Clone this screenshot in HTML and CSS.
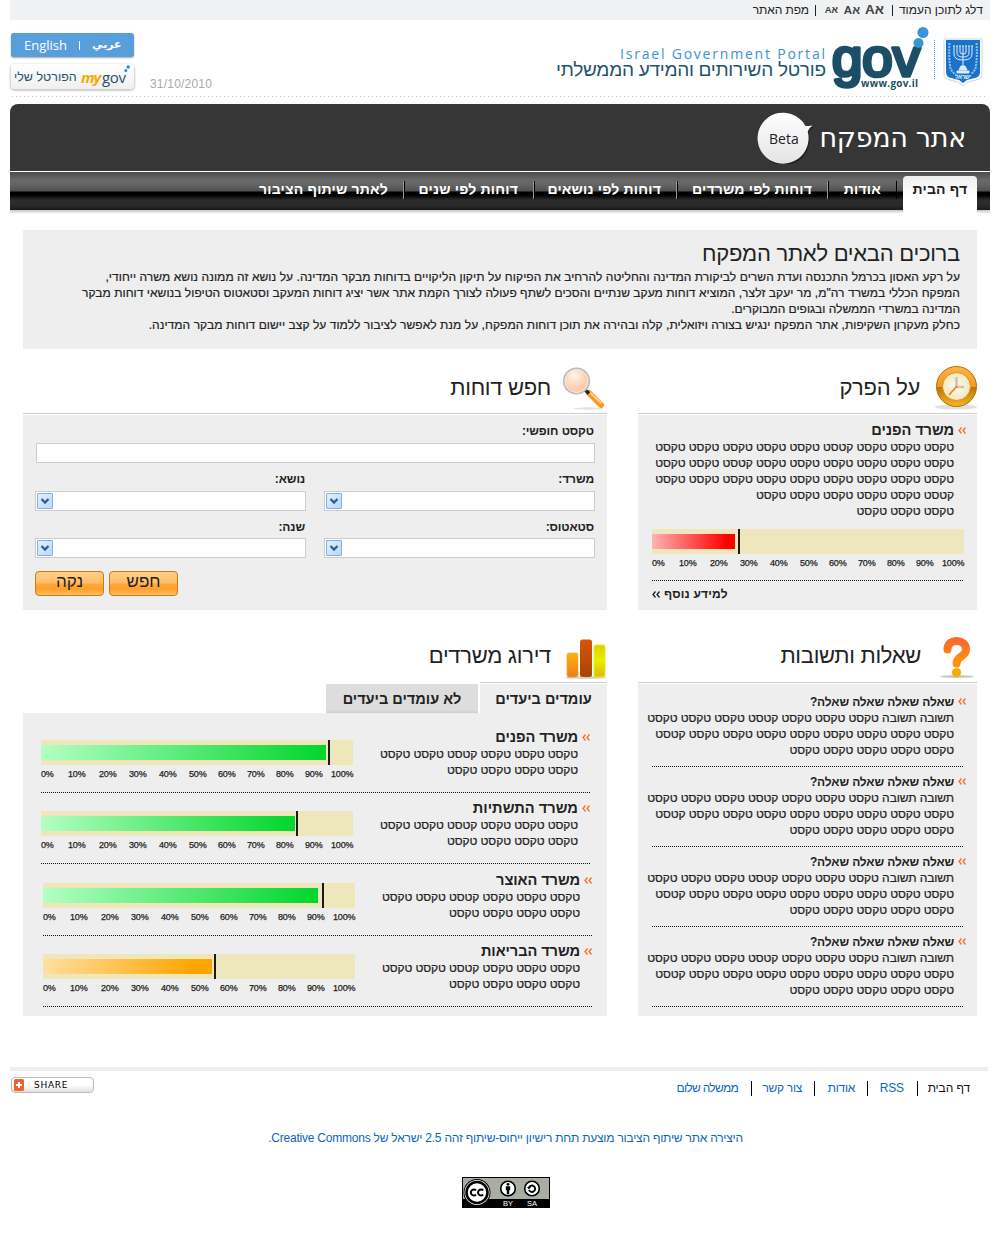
FILE: index.html
```html
<!DOCTYPE html>
<html lang="he" dir="rtl">
<head>
<meta charset="utf-8">
<title>אתר המפקח</title>
<link rel="stylesheet" href="styles.css">
</head>
<body>
<svg class="defs" width="0" height="0" aria-hidden="true">
  <symbol id="chev" viewBox="0 0 8 7"><path d="M3.5 .5 1 3.5l2.500 3M7.500 .5 5 3.500l2.500 3" fill="none" stroke="currentColor" stroke-width="1.300"/></symbol>
</svg>
<div class="page">
  <div class="topbar">
    <a class="skip">דלג לתוכן העמוד</a><i class="sep"></i>
    <b class="fs fs-l">אA</b><b class="fs fs-m">אA</b><b class="fs fs-s">אA</b><i class="sep"></i>
    <a class="map">מפת האתר</a>
  </div>

  <header class="header">
    <svg class="logo" width="432" height="70" viewBox="554 24 432 70" direction="ltr">
      <text x="620" y="59" font-family="'Open Sans', sans-serif" font-size="14" fill="#3b92d4" textLength="205">Israel Government Portal</text>
      <text x="556" y="76" direction="ltr" font-family="'Liberation Sans', sans-serif" font-size="19" fill="#1c546c" textLength="270">פורטל השירותים והמידע הממשלתי</text>
      <text x="832" y="75.500" font-family="'Liberation Sans', sans-serif" font-size="51" fill="#1c4f66" stroke="#1c4f66" stroke-width="3.600" stroke-linejoin="round" textLength="88" lengthAdjust="spacingAndGlyphs">gov</text>
      <circle cx="923" cy="32.500" r="5.500" fill="#3b92d4"/><circle cx="918.500" cy="43" r="5" fill="#3b92d4"/>
      <text x="861" y="87" font-family="'Open Sans', sans-serif" font-weight="bold" font-size="10" fill="#1c4f66" stroke="#fff" stroke-width="2" paint-order="stroke" textLength="57">www.gov.il</text>
      <path d="M934.500 40v39" stroke="#4aa0dc" stroke-dasharray="1 1"/>
      <path d="M944 39h38v34q0 6-6 7l-8 2-5 4-5-4-8-2q-6-1-6-7z" fill="#fff" stroke="#c8d8e8"/>
      <path d="M946 40h34v32q0 5-5 6l-8 2-4 3-4-3-8-2q-5-1-5-6z" fill="#1b72c8"/>
      <g fill="none" stroke="#dcecfa" stroke-width="1">
        <path d="M963 46v20M960 46v6q0 2 3 2t3-2v-6M957 46v7q0 4 6 4t6-4v-7M954 46v8q0 6 9 6t9-6v-8"/>
        <path d="M953 46h20" stroke-dasharray="2 1"/><path d="M961 66h4l2 4h-8zM957 71h12v2h-12z" fill="#dcecfa"/>
        <path d="M949.500 43q-1 14 1 26l4 5M976.500 43q1 14-1 26l-4 5" stroke="#8fc0ee" stroke-width="2" stroke-dasharray="2 1"/>
      </g>
      <text x="955" y="79" font-family="'Liberation Sans', sans-serif" font-size="6" font-weight="bold" fill="#e4f0fc" textLength="16">ישראל</text>
    </svg>
    <div class="side">
      <div class="side-buttons">
        <div class="langs"><span>English</span><i></i><b>عربي</b></div>
        <div class="mygov">
          <span class="mygov-he">הפורטל שלי</span><span class="mygov-my">my</span><span class="mygov-gov">gov</span>
          <svg class="mygov-dots" width="6" height="8" viewBox="0 0 6 8"><circle cx="1.800" cy="5.500" r="1.500" fill="#2a8fd6"/><circle cx="4.200" cy="2" r="1.700" fill="#2a8fd6"/></svg>
        </div>
      </div>
      <span class="date">31/10/2010</span>
    </div>
  </header>

  <div class="banner">
    <h1>אתר המפקח</h1>
    <div class="beta">
      <svg width="60" height="56" viewBox="0 0 60 56">
        <defs><linearGradient id="bub" x2="0" y2="1"><stop offset="0" stop-color="#fff"/><stop offset="1" stop-color="#e4e4e4"/></linearGradient></defs>
        <path d="M49.500 18q3 0 7-.5-3.500 2.500-4.800 6A25.500 25.500 0 1 1 49.500 18z" fill="#111" opacity=".6" transform="translate(1 1.500)"/>
        <path d="M49.500 18q3 0 7-.5-3.500 2.500-4.800 6A25.500 25.500 0 1 1 49.500 18z" fill="url(#bub)"/>
      </svg>
      <span>Beta</span>
    </div>
  </div>
  <nav class="nav">
    <a class="on">דף הבית</a>
    <a class="n2">אודות</a>
    <a class="n3">דוחות לפי משרדים</a>
    <a class="n4">דוחות לפי נושאים</a>
    <a class="n5">דוחות לפי שנים</a>
    <a class="n6">לאתר שיתוף הציבור</a>
  </nav>

  <section class="intro">
    <h2>ברוכים הבאים לאתר המפקח</h2>
    <p><span class="i1">על רקע האסון בכרמל התכנסה ועדת השרים לביקורת המדינה והחליטה להרחיב את הפיקוח על תיקון הליקויים בדוחות מבקר המדינה. על נושא זה ממונה נושא משרה ייחודי,</span><br>
    <span class="i2">המפקח הכללי במשרד רה"מ, מר יעקב זלצר, המוציא דוחות מעקב שנתיים והסכים לשתף פעולה לצורך הקמת אתר אשר יציג דוחות המעקב וסטאטוס הטיפול בנושאי דוחות מבקר</span><br>
    המדינה במשרדי הממשלה ובגופים המבוקרים.<br>
    <span class="i4">כחלק מעקרון השקיפות, אתר המפקח ינגיש בצורה ויזואלית, קלה ובהירה את תוכן דוחות המפקח, על מנת לאפשר לציבור ללמוד על קצב יישום דוחות מבקר המדינה.</span></p>
  </section>

  <main class="grid">
    <section class="agenda">
      <div class="head">
        <svg width="44" height="44" viewBox="0 0 44 44">
          <defs><linearGradient id="ck" x2="0" y2="1"><stop offset="0" stop-color="#ffb347"/><stop offset=".5" stop-color="#f09a1c"/><stop offset=".52" stop-color="#b87405"/><stop offset="1" stop-color="#f8b820"/></linearGradient>
          <radialGradient id="face"><stop offset="0" stop-color="#fffdf2"/><stop offset="1" stop-color="#f3e6bd"/></radialGradient></defs>
          <ellipse cx="22" cy="41" rx="21" ry="2.500" fill="#000" opacity=".12"/>
          <circle cx="22.500" cy="20.500" r="20" fill="url(#ck)" stroke="#b06f0c"/>
          <circle cx="22.500" cy="20.500" r="14" fill="url(#face)" stroke="#d9901d"/>
          <path d="M22.500 11v10M22 21h8" stroke="#c9c4ab" stroke-width="2.500"/><path d="M23 20l-8 9" stroke="#f07c10" stroke-width="1.600"/>
        </svg>
        <h2>על הפרק</h2>
      </div>
      <div class="panel agenda-panel">
        <div class="item">
          <svg class="chev"><use href="#chev"/></svg>
          <div><h3>משרד הפנים</h3>
          <p>טקסט טקסט טקסט קטסט טקסט טקסט טקסט טקסט טקסט<br>טקסט טקסט טקסט טקסט טקסט טקסט קטסט טקסט טקסט<br>טקסט טקסט טקסט טקסט טקסט טקסט טקסט טקסט טקסט<br>קטסט טקסט טקסט טקסט טקסט טקסט<br>טקסט טקסט טקסט</p></div>
        </div>
        <div class="chart">
          <div class="bar"><div class="fill red" style="width:83px"></div><div class="mark" style="left:86px"></div></div>
          <div class="scale"><span>0%</span><span>10%</span><span>20%</span><span>30%</span><span>40%</span><span>50%</span><span>60%</span><span>70%</span><span>80%</span><span>90%</span><span>100%</span></div>
        </div>
        <a class="more">למידע נוסף <svg class="chev"><use href="#chev"/></svg></a>
      </div>
    </section>

    <section class="search">
      <div class="head">
        <svg width="46" height="46" viewBox="0 0 46 46">
          <defs><radialGradient id="lens" cx=".4" cy=".3"><stop offset="0" stop-color="#fff4ec"/><stop offset="1" stop-color="#ffcdaa"/></radialGradient></defs>
          <ellipse cx="29" cy="43.500" rx="15" ry="1.200" fill="#000" opacity=".12"/>
          <path d="M29 28l12 12" stroke="#f59a22" stroke-width="6" stroke-linecap="round"/><path d="M29.500 27l12 11.500" stroke="#ffd08a" stroke-width="1.800"/>
          <path d="M24 24l5 4.500" stroke="#222" stroke-width="3.500"/>
          <circle cx="16.500" cy="16" r="12.700" fill="url(#lens)" stroke="#b9bcc0" stroke-width="1.800"/><circle cx="16.500" cy="16" r="11.500" fill="none" stroke="#ececec" stroke-width="1"/>
        </svg>
        <h2>חפש דוחות</h2>
      </div>
      <div class="panel form">
        <label>טקסט חופשי:</label>
        <div class="input"></div>
        <div class="fields">
          <label>משרד:</label><label>נושא:</label>
          <div class="select"><i><svg width="10" height="8" viewBox="0 0 10 8"><path d="M1.500 2 5 5.500 8.500 2" fill="none" stroke="#3c5887" stroke-width="2.300"/></svg></i></div>
          <div class="select"><i><svg width="10" height="8" viewBox="0 0 10 8"><path d="M1.500 2 5 5.500 8.500 2" fill="none" stroke="#3c5887" stroke-width="2.300"/></svg></i></div>
          <label>סטאטוס:</label><label>שנה:</label>
          <div class="select"><i><svg width="10" height="8" viewBox="0 0 10 8"><path d="M1.500 2 5 5.500 8.500 2" fill="none" stroke="#3c5887" stroke-width="2.300"/></svg></i></div>
          <div class="select"><i><svg width="10" height="8" viewBox="0 0 10 8"><path d="M1.500 2 5 5.500 8.500 2" fill="none" stroke="#3c5887" stroke-width="2.300"/></svg></i></div>
        </div>
        <div class="actions"><button>חפש</button><button>נקה</button></div>
      </div>
    </section>

    <section class="faq">
      <div class="head">
        <svg width="36" height="44" viewBox="0 0 36 44">
          <defs><linearGradient id="q" x2="0" y2="1"><stop offset="0" stop-color="#f96a2c"/><stop offset="1" stop-color="#ff9508"/></linearGradient></defs>
          <ellipse cx="18" cy="41.500" rx="17" ry="1.500" fill="#000" opacity=".22"/>
          <path d="M8.500 14.500C8.500 8 13 6 17.500 6S27 8.500 27 14.500C27 22 17.500 21 17.500 28.500" fill="none" stroke="url(#q)" stroke-width="8" stroke-linecap="round"/>
          <circle cx="17.500" cy="37.500" r="4.600" fill="#f6ab05"/>
        </svg>
        <h2>שאלות ותשובות</h2>
      </div>
      <div class="panel faq-panel">
        <div class="item qa"><svg class="chev"><use href="#chev"/></svg><div><h4>שאלה שאלה שאלה שאלה?</h4><p>תשובה תשובה טקסט טקסט טקסט קטסט טקסט טקסט טקסט<br>טקסט טקסט טקסט טקסט טקסט טקסט טקסט טקסט קטסט<br>טקסט טקסט טקסט טקסט טקסט</p></div></div>
        <div class="item qa"><svg class="chev"><use href="#chev"/></svg><div><h4>שאלה שאלה שאלה שאלה?</h4><p>תשובה תשובה טקסט טקסט טקסט קטסט טקסט טקסט טקסט<br>טקסט טקסט טקסט טקסט טקסט טקסט טקסט טקסט קטסט<br>טקסט טקסט טקסט טקסט טקסט</p></div></div>
        <div class="item qa"><svg class="chev"><use href="#chev"/></svg><div><h4>שאלה שאלה שאלה שאלה?</h4><p>תשובה תשובה טקסט טקסט טקסט קטסט טקסט טקסט טקסט<br>טקסט טקסט טקסט טקסט טקסט טקסט טקסט טקסט קטסט<br>טקסט טקסט טקסט טקסט טקסט</p></div></div>
        <div class="item qa"><svg class="chev"><use href="#chev"/></svg><div><h4>שאלה שאלה שאלה שאלה?</h4><p>תשובה תשובה טקסט טקסט טקסט קטסט טקסט טקסט טקסט<br>טקסט טקסט טקסט טקסט טקסט טקסט טקסט טקסט קטסט<br>טקסט טקסט טקסט טקסט טקסט</p></div></div>
      </div>
    </section>

    <section class="ranking">
      <div class="head">
        <svg width="44" height="42" viewBox="0 0 44 42">
          <defs>
            <linearGradient id="b1" x2="0" y2="1"><stop offset="0" stop-color="#f8b60a"/><stop offset="1" stop-color="#ee7d1d"/></linearGradient>
            <linearGradient id="b2" x2="0" y2="1"><stop offset="0" stop-color="#d95406"/><stop offset="1" stop-color="#a84503"/></linearGradient>
            <linearGradient id="b3" x2="0" y2="1"><stop offset="0" stop-color="#e0cc04"/><stop offset=".5" stop-color="#e6f000"/><stop offset="1" stop-color="#e0b808"/></linearGradient>
          </defs>
          <ellipse cx="22" cy="39.500" rx="21" ry="1.500" fill="#000" opacity=".18"/>
          <rect x="3" y="15" width="11" height="24" rx="2" fill="url(#b1)" stroke="#f3a021" stroke-width=".6"/>
          <rect x="16" y="1.500" width="12" height="37.500" rx="2.500" fill="url(#b2)"/>
          <rect x="30" y="7" width="11" height="32" rx="2" fill="url(#b3)" stroke="#f2e720"/>
        </svg>
        <h2>דירוג משרדים</h2>
      </div>
      <div class="tabs"><span class="tab active">עומדים ביעדים</span><span class="tab">לא עומדים ביעדים</span></div>
      <div class="panel rank-panel">
        <div class="row">
          <div class="item"><svg class="chev"><use href="#chev"/></svg><div><h3>משרד הפנים</h3><p>טקסט טקסט טקסט קטסט טקסט טקסט<br>טקסט טקסט טקסט טקסט</p></div></div>
          <div class="chart">
            <div class="bar"><div class="fill green" style="width:285px"></div><div class="mark" style="left:287px"></div></div>
            <div class="scale"><span>0%</span><span>10%</span><span>20%</span><span>30%</span><span>40%</span><span>50%</span><span>60%</span><span>70%</span><span>80%</span><span>90%</span><span>100%</span></div>
          </div>
        </div>
        <div class="row">
          <div class="item"><svg class="chev"><use href="#chev"/></svg><div><h3 class="wide">משרד התשתיות</h3><p>טקסט טקסט טקסט קטסט טקסט טקסט<br>טקסט טקסט טקסט טקסט</p></div></div>
          <div class="chart">
            <div class="bar"><div class="fill green" style="width:254px"></div><div class="mark" style="left:255px"></div></div>
            <div class="scale"><span>0%</span><span>10%</span><span>20%</span><span>30%</span><span>40%</span><span>50%</span><span>60%</span><span>70%</span><span>80%</span><span>90%</span><span>100%</span></div>
          </div>
        </div>
        <div class="row shifted tall">
          <div class="item"><svg class="chev"><use href="#chev"/></svg><div><h3>משרד האוצר</h3><p>טקסט טקסט טקסט קטסט טקסט טקסט<br>טקסט טקסט טקסט טקסט</p></div></div>
          <div class="chart">
            <div class="bar"><div class="fill green" style="width:275px"></div><div class="mark" style="left:279px"></div></div>
            <div class="scale"><span>0%</span><span>10%</span><span>20%</span><span>30%</span><span>40%</span><span>50%</span><span>60%</span><span>70%</span><span>80%</span><span>90%</span><span>100%</span></div>
          </div>
        </div>
        <div class="row shifted">
          <div class="item"><svg class="chev"><use href="#chev"/></svg><div><h3>משרד הבריאות</h3><p>טקסט טקסט טקסט קטסט טקסט טקסט<br>טקסט טקסט טקסט טקסט</p></div></div>
          <div class="chart">
            <div class="bar"><div class="fill orange" style="width:169px"></div><div class="mark" style="left:171px"></div></div>
            <div class="scale"><span>0%</span><span>10%</span><span>20%</span><span>30%</span><span>40%</span><span>50%</span><span>60%</span><span>70%</span><span>80%</span><span>90%</span><span>100%</span></div>
          </div>
        </div>
      </div>
    </section>
  </main>

  <footer class="footer">
    <div class="links"><a class="home">דף הבית</a><a class="rss">RSS</a><a class="about">אודות</a><a class="contact">צור קשר</a><a class="shalom">ממשלה שלום</a></div>
    <div class="share"><svg width="10" height="12" viewBox="0 0 10 12"><rect width="10" height="12" rx="1.500" fill="#f0622d"/><path d="M5 3v6M2 6h6" stroke="#fff" stroke-width="2"/></svg><span>SHARE</span></div>
  </footer>
  <p class="license">היצירה אתר שיתוף הציבור מוצעת תחת רישיון ייחוס-שיתוף זהה 2.5 ישראל של Creative Commons.</p>
  <svg class="cc" width="88" height="31" viewBox="0 0 88 31" direction="ltr">
    <rect width="88" height="31" fill="#000"/><rect x="1" y="1" width="86" height="21" fill="#a9aea5"/>
    <circle cx="15" cy="15.500" r="13.500" fill="#000"/><circle cx="15" cy="15.500" r="12.500" fill="#fff"/><circle cx="15" cy="15.500" r="10.500" fill="none" stroke="#000" stroke-width="2.600"/>
    <path d="M14 13.400a3 3 0 1 0 0 4.200M21.200 13.400a3 3 0 1 0 0 4.200" fill="none" stroke="#000" stroke-width="2"/>
    <circle cx="46" cy="11.500" r="7.300" fill="#fff" stroke="#000" stroke-width="1.600"/><circle cx="46" cy="7.300" r="1.400"/><path d="M43.800 9.300h4.400v4h-1v4h-2.400v-4h-1z"/>
    <circle cx="70" cy="11.500" r="7.300" fill="#fff" stroke="#000" stroke-width="1.600"/><path d="M67 10.500a3.200 3.200 0 1 1 0 2.500" fill="none" stroke="#000" stroke-width="1.900"/><path d="M65 10h4l-2 2.600z"/>
    <g fill="#fff" font-family="'Liberation Sans', sans-serif" font-size="7.500"><text x="41" y="29" textLength="10">BY</text><text x="65" y="29" textLength="10">SA</text></g>
  </svg>
</div>
</body>
</html>
```
FILE: styles.css
```css
* { box-sizing: border-box; }
body { margin: 0; background: #fff; color: #222; font: 12px/16px "Liberation Sans", Arial, sans-serif; }
h1, h2, h3, h4, p { margin: 0; font-weight: normal; white-space: nowrap; }
svg { display: block; }
.defs { position: absolute; }
.page { width: 980px; margin: 0 10px; }

.topbar { height: 20px; background: #f0f1f3; display: flex; align-items: center; padding-right: 7px; font-size: 12px; white-space: nowrap; }
.topbar .sep { width: 1px; height: 11px; background: #222; }
.skip { width: 84px; margin-left: 6px; }
.fs { color: #444; }
.fs-l { font-size: 13.5px; width: 19px; margin-right: 8px; }
.fs-m { font-size: 11.5px; width: 17px; margin-right: 5px; }
.fs-s { font-size: 9.5px; width: 15px; margin-right: 5px; margin-left: 7px; }
.map { margin-right: 6px; letter-spacing: -.1px; }

.header { height: 77px; margin: 0 2px 7px 0; padding: 4px 2px 0 0; display: flex; justify-content: space-between; background: repeating-linear-gradient(90deg, #d3bcc4 0 1px, transparent 1px 4px) 2px 76px / 976px 1px no-repeat; }
.side { display: flex; flex-direction: row-reverse; align-items: flex-start; padding-left: 1px; gap: 16px; }
.side-buttons { display: flex; flex-direction: column; gap: 7px; padding-top: 9px; width: 123px; }
.langs { direction: ltr; height: 24px; border-radius: 3px; background: #579edb; box-shadow: 0 1px 2px #aaa; color: #fff; display: flex; align-items: center; padding-left: 13px; gap: 12px; font: 13px/24px "Open Sans", sans-serif; }
.langs i { width: 1px; height: 9px; background: #fff; }
.langs b { font: bold 11px/16px "DejaVu Sans", sans-serif; }
.mygov { direction: ltr; height: 25px; border-radius: 4px; background: linear-gradient(#fff, #f0f0f0); box-shadow: 0 1px 2px 1px #ccc; display: flex; align-items: center; padding-left: 3px; color: #1c546c; white-space: nowrap; }
.mygov-he { font-size: 12.5px; width: 63px; margin-right: 4px; }
.mygov-my { font: italic bold 15px/20px "Open Sans", sans-serif; color: #f6a900; letter-spacing: -1px; width: 21px; }
.mygov-gov { font: 15px/20px "Open Sans", sans-serif; letter-spacing: -.3px; }
.mygov-dots { align-self: flex-start; margin: 1px 0 0 -2px; }
.date { color: #aaa; font-size: 12px; padding-top: 52px; letter-spacing: .2px; }

.banner { height: 67px; background: #363636; border-radius: 8px 8px 0 0; display: flex; padding: 8px 24px 0 0; }
.banner h1 { color: #fff; font: 27px/52px "DejaVu Sans", sans-serif; letter-spacing: -.3px; width: 146px; }
.beta { display: grid; direction: ltr; width: 60px; margin-right: 6px; }
.beta > * { grid-area: 1 / 1; }
.beta svg { margin: -4px 0 0 2px; }
.beta span { color: #222; font: 14px/54px "Open Sans", sans-serif; padding-left: 15px; }

.nav { height: 43px; padding: 4px 13px 0 0; border-top: 1px solid #fff; margin-bottom: 16px; display: flex; align-items: flex-start; font-weight: bold; font-size: 14px; letter-spacing: .2px; color: #fff; white-space: nowrap;
  background: linear-gradient(#4a4a4a, #696969 8px, #666 12px, #505050 19px, #000 20px, #000 23px, #2c2c2c 28px, #2a2a2a 33px, #1a1a1a 38px, #c4c4c4 38px, #fff 42px); }
.nav a { height: 18px; line-height: 17px; margin-top: 5px; padding-right: 15px; }
.nav a:not(.n6) { border-left: 1px solid #999; box-shadow: inset 1px 0 #000; }
.nav a.on { height: 38px; margin-top: 0; width: 74px; padding: 0; border: 0; box-shadow: none; text-align: center; line-height: 27px; background: linear-gradient(#eee, #fff 20px); border-radius: 4px 4px 0 0; color: #222; }
.nav a.n2 { width: 70px; margin-right: 6px; border-right: 1px solid #000; }
.nav .n3 { width: 151px; }
.nav .n4 { width: 143px; }
.nav .n5 { width: 130px; }

.intro { margin: 0 13px; height: 119px; background: #eee; padding: 10px 17px 0 0; }
.intro h2, .head h2 { font-size: 22px; line-height: 28px; }
.intro h2 { letter-spacing: -.27px; }
.head h2 { letter-spacing: -.3px; }
.intro p, .item p { -webkit-text-stroke: .2px #222; }
.intro p { padding-top: 1px; }
.i1 { letter-spacing: .07px; }
.i2 { letter-spacing: .043px; }
.i4 { letter-spacing: .055px; }
.grid { display: grid; grid-template-columns: 339px 584px; column-gap: 31px; margin: 13px 13px 0; grid-template-rows: 248px 406px; }
.head { height: 52px; display: flex; align-items: flex-start; border-bottom: 1px solid #ccc; margin-bottom: 1px; padding-top: 3px; }
.head h2 { padding-top: 9px; }
.agenda .head svg { margin: 1px -1px 0 14px; }
.search .head svg { margin: 0 1px 0 9px; }
.panel { background: #eee; }
.item { display: flex; gap: 4px; letter-spacing: -.08px; }
.chev { width: 8px; height: 7px; color: #f9702a; flex: none; }
h3 { font-size: 14.6px; line-height: 18px; font-weight: bold; }
h3.wide { letter-spacing: .05px; }
h4 { font-size: 12px; line-height: 16px; font-weight: bold; letter-spacing: -.13px; }

.agenda-panel { height: 195px; padding: 6px 11px 0 14px; }
.agenda-panel .chev { margin-top: 6px; }
.chart { direction: ltr; width: 312px; flex: none; }
.bar { height: 25px; background: #efe7bc; position: relative; padding-top: 5px; }
.fill { height: 15px; }
.red { background: linear-gradient(90deg, #ffb3b3, #f00 90%); }
.green { background: linear-gradient(90deg, #b3ffc2, #00d62b); }
.orange { background: linear-gradient(90deg, #ffdf9f, #ffa500 90%); }
.mark { position: absolute; top: 0; width: 2px; height: 25px; background: #1a1a1a; }
.scale { display: grid; grid-template-columns: 27px 31px 30px 30px 30px 29px 29px 29px 29px 26px 24px; font-size: 9px; line-height: 10px; padding-top: 4px; color: #222; -webkit-text-stroke: .25px #222; letter-spacing: -.15px; }
.agenda-panel .chart { margin: 10px 2px 0 0; height: 52px; background: repeating-linear-gradient(90deg, #111 0 1px, transparent 1px 2px) 0 51px / 312px 1px no-repeat; }
.more { display: flex; justify-content: flex-end; gap: 4px; font-weight: bold; padding-top: 5px; font-size: 12px; letter-spacing: .2px; }
.agenda-panel .more .chev { color: #222; margin-top: 5px; }

.form { height: 195px; padding: 8px 12px 0; }
.form label { font-weight: bold; height: 16px; padding-right: 1px; white-space: nowrap; display: block; letter-spacing: -.1px; }
.input { height: 20px; background: #fff; border: 1px solid #ccc; margin: 4px 0 8px 1px; }
.fields { display: grid; grid-template-columns: 271px 271px; column-gap: 18px; }
.select { height: 20px; background: #fff; border: 1px solid #ccc; margin: 4px 0 8px; padding: 1px; display: flex; justify-content: flex-end; }
.select i { width: 16px; height: 16px; border: 1px solid #8aa9e8; border-radius: 1px; background: linear-gradient(135deg, #e2eefe, #b4dcfd); display: grid; place-items: center; }
.fields .select:nth-last-child(-n+2) { margin-top: 3px; }
.actions { display: flex; justify-content: flex-end; gap: 5px; margin-top: 5px; }
button { width: 69px; height: 25px; padding: 0 0 3px; border: 1px solid #cf7b0c; border-radius: 4px; background: linear-gradient(#ffcf8a, #ffbd68 11px, #ffa83b 12px, #ff9f28 17px, #ffc068); font: 17px/20px "Liberation Sans", sans-serif; color: #222; }

.faq, .ranking { padding-top: 17px; }
.faq .head, .ranking .head { height: 56px; padding-top: 6px; }
.faq .head svg { margin: 2px 2px 0 18px; }
.faq-panel { height: 332px; padding: 10px 11px 0 14px; }
.qa { height: 80px; background: repeating-linear-gradient(90deg, #111 0 1px, transparent 1px 2px) 0 72px / 312px 1px no-repeat; }
.qa .chev { margin-top: 4px; }

.ranking .head { border-bottom: 0; padding-bottom: 1px; background: linear-gradient(#ccc, #ccc) right bottom / 127px 1px no-repeat; }
.ranking .head svg { margin: 5px -1px 0 13px; }
.tabs { display: flex; gap: 2px; font-weight: bold; font-size: 14.5px; line-height: 30px; white-space: nowrap; }
.tab { height: 29px; width: 152px; text-align: center; background: linear-gradient(#ddd 26px, #ccc); }
.tab.active { width: 127px; background: #eee; }
.rank-panel { height: 303px; padding: 9px 17px 0 18px; }
.row { height: 71px; display: flex; justify-content: space-between; padding-top: 6px; background: repeating-linear-gradient(90deg, #111 0 1px, transparent 1px 2px) 0 100% / 549px 1px no-repeat; }
.row .chev { margin-top: 6px; }
.row .chart { padding-top: 12px; }
.shifted { margin: 0 -2px 0 2px; }
.tall { height: 72px; padding-top: 7px; }

.footer { margin: 51px 2px 0 0; border-top: 4px solid #eee; display: flex; justify-content: space-between; align-items: flex-start; height: 51px; padding-left: 1px; }
.links { display: flex; padding: 10px 18px 0 0; color: #0c66c0; white-space: nowrap; }
.links a { line-height: 15px; letter-spacing: -.1px; }
.links a + a { border-right: 1px solid #000; padding-right: 13px; }
.links .home { color: #111; width: 52px; }
.links .rss { width: 50px; }
.links .about, .links .contact { letter-spacing: -.3px; }
.links .about { width: 53px; padding-right: 12px; }
.links .contact { width: 63px; padding-right: 12px; }
.links .shalom { letter-spacing: -.7px; }
.share { direction: ltr; width: 83px; height: 16px; margin-top: 6px; border: 1px solid #bbb; border-radius: 4px; background: linear-gradient(#fff 50%, #e0e0e0); display: flex; align-items: center; gap: 10px; padding-left: 2px; font: 9px/14px "DejaVu Sans", sans-serif; letter-spacing: .7px; color: #000; }
.license { text-align: center; color: #0c66c0; padding: 12px 0 0 11px; height: 59px; font-size: 12px; letter-spacing: -.22px; }
.cc { margin-right: 440px; }
```
